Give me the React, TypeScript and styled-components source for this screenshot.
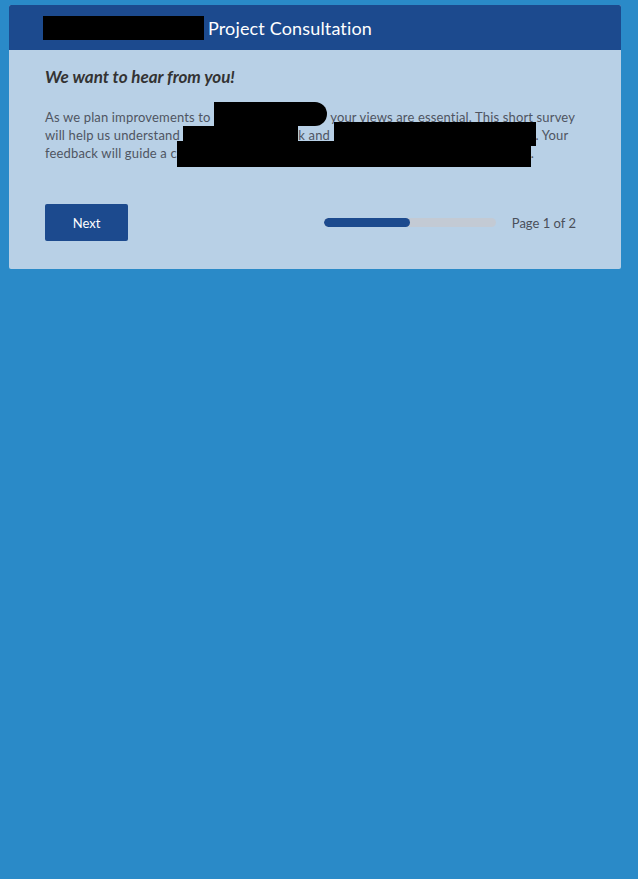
import React from 'react'
import styled, { createGlobalStyle } from 'styled-components'

const GlobalStyle = createGlobalStyle`
  html, body {
    margin: 0;
    padding: 0;
    background-color: #2a8ac8;
    min-height: 100%;
  }
  body {
    font-family: Lato, 'Open Sans', 'Liberation Sans', sans-serif;
    -webkit-font-smoothing: antialiased;
  }
`

const Page = styled.div`
  padding: 5px 17px 0 9px;
`

const Card = styled.section`
  background-color: #b8d0e6;
  border-radius: 2px;
  overflow: hidden;
`

const Header = styled.header`
  display: flex;
  align-items: center;
  gap: 4px;
  height: 45px;
  padding: 0 34px;
  background-color: #1c4a8e;
`

const Title = styled.h1`
  margin: 0;
  color: #fff;
  font-size: 18px;
  font-weight: 400;
  letter-spacing: 0.15px;
`

const Body = styled.div`
  padding: 16px 45px 28px 36px;
`

const Heading = styled.h2`
  margin: 0 0 20px;
  color: #333;
  font-size: 17px;
  line-height: 22px;
  font-style: italic;
  font-weight: 700;
`

const Intro = styled.p`
  margin: 0;
  color: #4f5562;
  font-size: 13px;
  line-height: 18px;
  letter-spacing: 0.15px;
  white-space: nowrap;
`

// black redaction block; sits on the baseline without growing the line
const Redact = styled.span<{ $w: number; $h: number; $drop?: number; $round?: boolean }>`
  display: inline-block;
  vertical-align: baseline;
  width: ${(p) => p.$w}px;
  height: ${(p) => p.$h}px;
  margin: ${(p) => -(p.$h - (p.$drop ?? 0))}px 0 ${(p) => -(p.$drop ?? 0)}px;
  background-color: #000;
  border-radius: ${(p) => (p.$round ? '0 12px 12px 0' : '0')};
`

const HeaderRedact = styled.span`
  display: block;
  width: 161px;
  height: 24px;
  background-color: #000;
`

const Footer = styled.div`
  display: flex;
  align-items: center;
  justify-content: space-between;
  margin-top: 42px;
`

const NextButton = styled.button`
  width: 83px;
  height: 37px;
  border: none;
  border-radius: 2px;
  background-color: #1c4a8e;
  color: #fff;
  font-family: inherit;
  font-size: 13px;
  cursor: pointer;
`

const Progress = styled.div`
  display: flex;
  align-items: center;
  gap: 16px;
`

const Track = styled.div`
  width: 172px;
  height: 9px;
  border-radius: 5px;
  background-color: #c3cad4;
  overflow: hidden;
`

const Fill = styled.div`
  height: 100%;
  border-radius: 5px;
  background-color: #1c4a8e;
`

const PageLabel = styled.span`
  color: #4a4f5a;
  font-size: 13px;
`

const page = 1
const pages = 2

export default function App() {
  return (
    <>
      <GlobalStyle />
      <Page>
        <Card>
          <Header>
            <HeaderRedact />
            <Title>Project Consultation</Title>
          </Header>
          <Body>
            <Heading>We want to hear from you!</Heading>
            <Intro>
              As we plan improvements to <Redact $w={113} $h={24} $drop={4} $round /> your views
              are essential. This short survey
              <br />
              will help us understand <Redact $w={115} $h={20} $drop={6} />k and{' '}
              <Redact $w={202} $h={24} $drop={6} />. Your
              <br />
              feedback will guide a c<Redact $w={354} $h={26} $drop={9} />.
            </Intro>
            <Footer>
              <NextButton>Next</NextButton>
              <Progress>
                <Track>
                  <Fill style={{ width: `${(page / pages) * 100}%` }} />
                </Track>
                <PageLabel>
                  Page {page} of {pages}
                </PageLabel>
              </Progress>
            </Footer>
          </Body>
        </Card>
      </Page>
    </>
  )
}
